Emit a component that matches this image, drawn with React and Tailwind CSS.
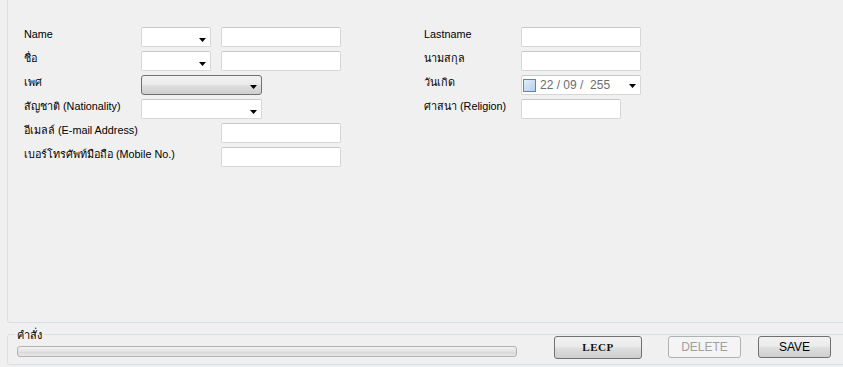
import React from "react";

const FONT = { fontFamily: '"Liberation Sans", "Noto Sans", "DejaVu Sans", sans-serif' };

function Arrow() {
  return (
    <svg width="7" height="4" viewBox="0 0 7 4" className="block">
      <path d="M0 0 H7 L3.5 4 Z" fill="#000" />
    </svg>
  );
}

function TextBox({ w }) {
  return <div className={`h-[20px] ${w} bg-white border border-[#d6d6d6] border-t-[#c9c9c9] rounded-[2px]`} />;
}

function Combo({ w }) {
  return (
    <div className={`h-[20px] ${w} bg-white border border-[#d6d6d6] border-t-[#c9c9c9] rounded-[2px] flex items-start justify-end pr-[4px] pt-[10px]`}>
      <Arrow />
    </div>
  );
}

function Label({ children, w }) {
  return <div className={`${w} shrink-0 text-[10.8px] leading-[14px] text-black`}>{children}</div>;
}

export default function App() {
  return (
    <div className="w-[843px] h-[367px] bg-[#f0f0f0] overflow-hidden" style={FONT}>
      {/* upper group box */}
      <div className="ml-[7px] -mt-[3px] h-[326px] w-[845px] border border-[#d5dfe5] rounded-[3px] pt-[29px] pl-[16px] flex">
        {/* left column */}
        <div className="w-[400px] flex flex-col gap-[4px]">
          <div className="flex items-start h-[20px]">
            <Label w="w-[117px]">Name</Label>
            <Combo w="w-[70px]" />
            <div className="w-[10px]" />
            <TextBox w="w-[120px]" />
          </div>
          <div className="flex items-start h-[20px]">
            <Label w="w-[117px]">ชื่อ</Label>
            <Combo w="w-[70px]" />
            <div className="w-[10px]" />
            <TextBox w="w-[120px]" />
          </div>
          <div className="flex items-start h-[20px]">
            <Label w="w-[117px]">เพศ</Label>
            <div className="h-[20px] w-[121px] border border-[#707070] rounded-[3px] flex items-start justify-end pr-[4px] pt-[9px] bg-[linear-gradient(to_bottom,#f2f2f2_0%,#ebebeb_45%,#dddddd_55%,#cfcfcf_100%)]">
              <Arrow />
            </div>
          </div>
          <div className="flex items-start h-[20px]">
            <Label w="w-[117px]">สัญชาติ (Nationality)</Label>
            <Combo w="w-[121px]" />
          </div>
          <div className="flex items-start h-[20px]">
            <Label w="w-[197px]">อีเมลล์ (E-mail Address)</Label>
            <TextBox w="w-[120px]" />
          </div>
          <div className="flex items-start h-[20px]">
            <Label w="w-[197px]">เบอร์โทรศัพท์มือถือ (Mobile No.)</Label>
            <TextBox w="w-[120px]" />
          </div>
        </div>
        {/* right column */}
        <div className="flex flex-col gap-[4px]">
          <div className="flex items-start h-[20px]">
            <Label w="w-[97px]">Lastname</Label>
            <TextBox w="w-[120px]" />
          </div>
          <div className="flex items-start h-[20px]">
            <Label w="w-[97px]">นามสกุล</Label>
            <TextBox w="w-[120px]" />
          </div>
          <div className="flex items-start h-[20px]">
            <Label w="w-[97px]">วันเกิด</Label>
            <div className="h-[20px] w-[120px] bg-white border border-[#d6d6d6] border-t-[#c9c9c9] rounded-[2px] flex items-center pl-[1px] pr-[4px]">
              <div className="w-[13px] h-[13px] border border-[#5b84b1] bg-[linear-gradient(135deg,#e2eefa,#b4cfea)] shrink-0" />
              <span className="ml-[4px] text-[12px] leading-[14px] text-[#6d6d6d]">22 / 09 /&nbsp; 255</span>
              <div className="ml-auto mt-[2px]">
                <Arrow />
              </div>
            </div>
          </div>
          <div className="flex items-start h-[20px]">
            <Label w="w-[97px]">ศาสนา (Religion)</Label>
            <TextBox w="w-[100px]" />
          </div>
        </div>
      </div>

      {/* lower group box */}
      <div className="relative ml-[7px] mt-[11px] h-[31px] w-[845px] border border-[#d5dfe5] rounded-[3px] flex items-start">
        <div className="absolute left-[7px] -top-[7px] bg-[#f0f0f0] px-[2px] text-[11px] leading-[14px] text-black">คำสั่ง</div>
        <div className="ml-[9px] mt-[11px] w-[500px] h-[11px] border border-[#b2b2b2] rounded-[3px] bg-[linear-gradient(to_bottom,#f3f3f3,#e2e2e2_50%,#d6d6d6_51%,#e8e8e8)]" />
        <div className="ml-[37px] mt-[1px] w-[88px] h-[23px] border border-[#707070] rounded-[3px] flex items-center justify-center bg-[linear-gradient(to_bottom,#f2f2f2_0%,#ebebeb_45%,#dddddd_55%,#cfcfcf_100%)]">
          <span className="text-[11px] font-bold tracking-[0.5px] text-[#111]" style={{ fontFamily: '"Liberation Serif", "DejaVu Serif", serif' }}>LECP</span>
        </div>
        <div className="ml-[26px] mt-[1px] w-[73px] h-[22px] border border-[#adb2b5] rounded-[3px] flex items-center justify-center bg-[#f4f4f4]">
          <span className="text-[12px] text-[#a0a0a0]">DELETE</span>
        </div>
        <div className="ml-[17px] mt-[1px] w-[73px] h-[22px] border border-[#707070] rounded-[3px] flex items-center justify-center bg-[linear-gradient(to_bottom,#f2f2f2_0%,#ebebeb_45%,#dddddd_55%,#cfcfcf_100%)]">
          <span className="text-[12px] text-black">SAVE</span>
        </div>
      </div>
    </div>
  );
}
